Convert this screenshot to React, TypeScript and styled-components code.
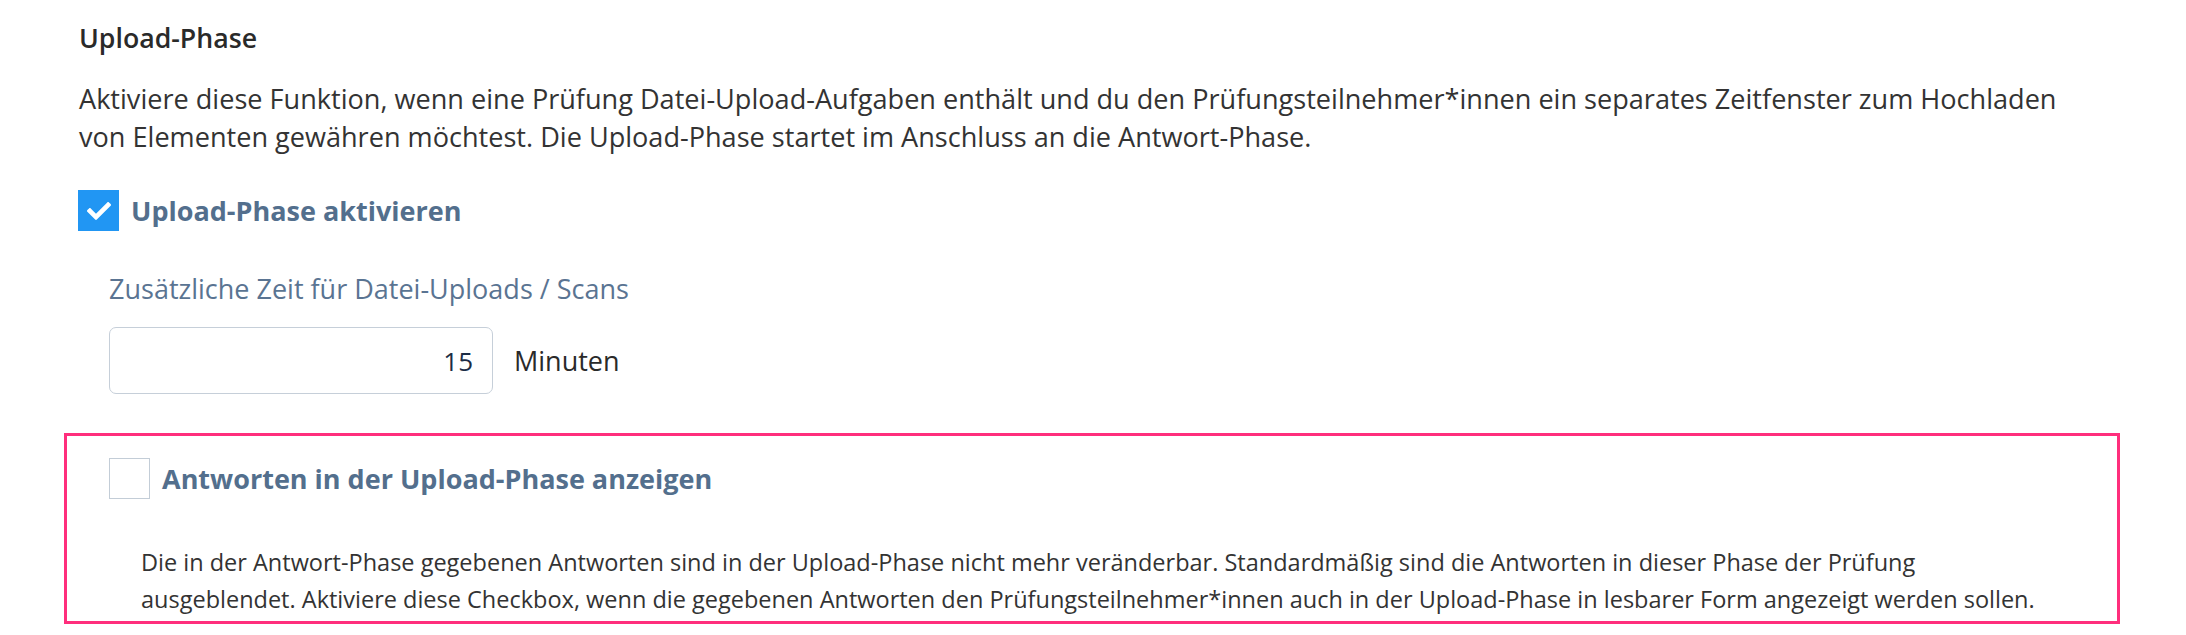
import React, { useState } from "react";
import styled, { createGlobalStyle } from "styled-components";

const GlobalStyle = createGlobalStyle`
  html, body {
    margin: 0;
    padding: 0;
    background: #ffffff;
  }
  body {
    font-family: "Open Sans", "Noto Sans", "Liberation Sans", sans-serif;
    color: #333333;
    -webkit-font-smoothing: antialiased;
  }
  * { box-sizing: border-box; }
`;

const Page = styled.div`
  padding: 18px 0 0 64px;
`;

const Section = styled.section`
  width: 2056px;
  display: flex;
  flex-direction: column;
`;

const Title = styled.h3`
  margin: 0;
  padding: 0 15px;
  font-size: 26.7px;
  line-height: 40px;
  font-weight: 600;
  color: #2a2a2a;
`;

const Lead = styled.p`
  margin: 22px 0 0;
  padding: 0 30px 0 15px;
  font-size: 27.1px;
  line-height: 38px;
  color: #333333;
`;

const CheckRow = styled.label<{ $inset: number; $top?: number }>`
  display: flex;
  align-items: center;
  gap: 12px;
  margin-top: ${(p) => p.$top ?? 0}px;
  padding-left: ${(p) => p.$inset}px;
  cursor: pointer;
`;

const Box = styled.span<{ $checked: boolean }>`
  flex: none;
  width: 41px;
  height: 41px;
  display: flex;
  align-items: center;
  justify-content: center;
  background: ${(p) => (p.$checked ? "#2196f3" : "#ffffff")};
  border: ${(p) => (p.$checked ? "none" : "1.5px solid #c3cdd7")};
`;

const CheckLabel = styled.span`
  font-size: 27px;
  line-height: 40px;
  font-weight: 700;
  color: #536f8d;
`;

const Field = styled.div`
  margin-top: 40px;
  padding-left: 45px;
  display: flex;
  flex-direction: column;
  gap: 20px;
`;

const FieldLabel = styled.div`
  font-size: 27px;
  line-height: 36px;
  color: #5a7492;
`;

const InputRow = styled.div`
  display: flex;
  align-items: center;
  gap: 21px;
`;

const NumberInput = styled.input`
  width: 384px;
  height: 67px;
  border: 1.5px solid #c6cfd9;
  border-radius: 7px;
  padding: 0 19px;
  text-align: right;
  font-family: inherit;
  font-size: 26px;
  color: #1b2c45;
  outline: none;
`;

const Unit = styled.span`
  font-size: 27px;
  color: #2a2a2a;
`;

const Highlight = styled.div`
  margin-top: 39px;
  border: 3px solid #ff2e7c;
  padding: 22px 0 3px 42px;
  display: flex;
  flex-direction: column;
`;

const Hint = styled.p`
  margin: 45px 0 0;
  padding-left: 32px;
  width: 1990px;
  font-size: 23.5px;
  line-height: 37px;
  color: #333333;
`;

function Check({ checked }: { checked: boolean }) {
  return (
    <Box $checked={checked}>
      {checked && (
        <svg width="24" height="24" viewBox="0 0 512 512">
          <path
            fill="#ffffff"
            d="M173.898 439.404l-166.4-166.4c-9.997-9.997-9.997-26.206 0-36.204l36.203-36.204c9.997-9.998 26.207-9.998 36.204 0L192 312.69 432.095 72.596c9.997-9.997 26.207-9.997 36.204 0l36.203 36.204c9.997 9.997 9.997 26.206 0 36.204l-294.4 294.401c-9.998 9.997-26.207 9.997-36.204-.001z"
          />
        </svg>
      )}
    </Box>
  );
}

export default function App() {
  const [uploadPhase, setUploadPhase] = useState(true);
  const [showAnswers, setShowAnswers] = useState(false);
  const [minutes, setMinutes] = useState("15");

  return (
    <>
      <GlobalStyle />
      <Page>
        <Section>
          <Title>Upload-Phase</Title>
          <Lead>
            Aktiviere diese Funktion, wenn eine Prüfung Datei-Upload-Aufgaben enthält und du den
            Prüfungsteilnehmer*innen ein separates Zeitfenster zum Hochladen von Elementen gewähren
            möchtest. Die Upload-Phase startet im Anschluss an die Antwort-Phase.
          </Lead>

          <CheckRow $inset={14} $top={34} onClick={() => setUploadPhase((v) => !v)}>
            <Check checked={uploadPhase} />
            <CheckLabel>Upload-Phase aktivieren</CheckLabel>
          </CheckRow>

          <Field>
            <FieldLabel>Zusätzliche Zeit für Datei-Uploads / Scans</FieldLabel>
            <InputRow>
              <NumberInput value={minutes} onChange={(e) => setMinutes(e.target.value)} />
              <Unit>Minuten</Unit>
            </InputRow>
          </Field>

          <Highlight>
            <CheckRow $inset={0} onClick={() => setShowAnswers((v) => !v)}>
              <Check checked={showAnswers} />
              <CheckLabel>Antworten in der Upload-Phase anzeigen</CheckLabel>
            </CheckRow>
            <Hint>
              Die in der Antwort-Phase gegebenen Antworten sind in der Upload-Phase nicht mehr
              veränderbar. Standardmäßig sind die Antworten in dieser Phase der Prüfung
              <br />
              ausgeblendet. Aktiviere diese Checkbox, wenn die gegebenen Antworten den
              Prüfungsteilnehmer*innen auch in der Upload-Phase in lesbarer Form angezeigt werden
              sollen.
            </Hint>
          </Highlight>
        </Section>
      </Page>
    </>
  );
}
